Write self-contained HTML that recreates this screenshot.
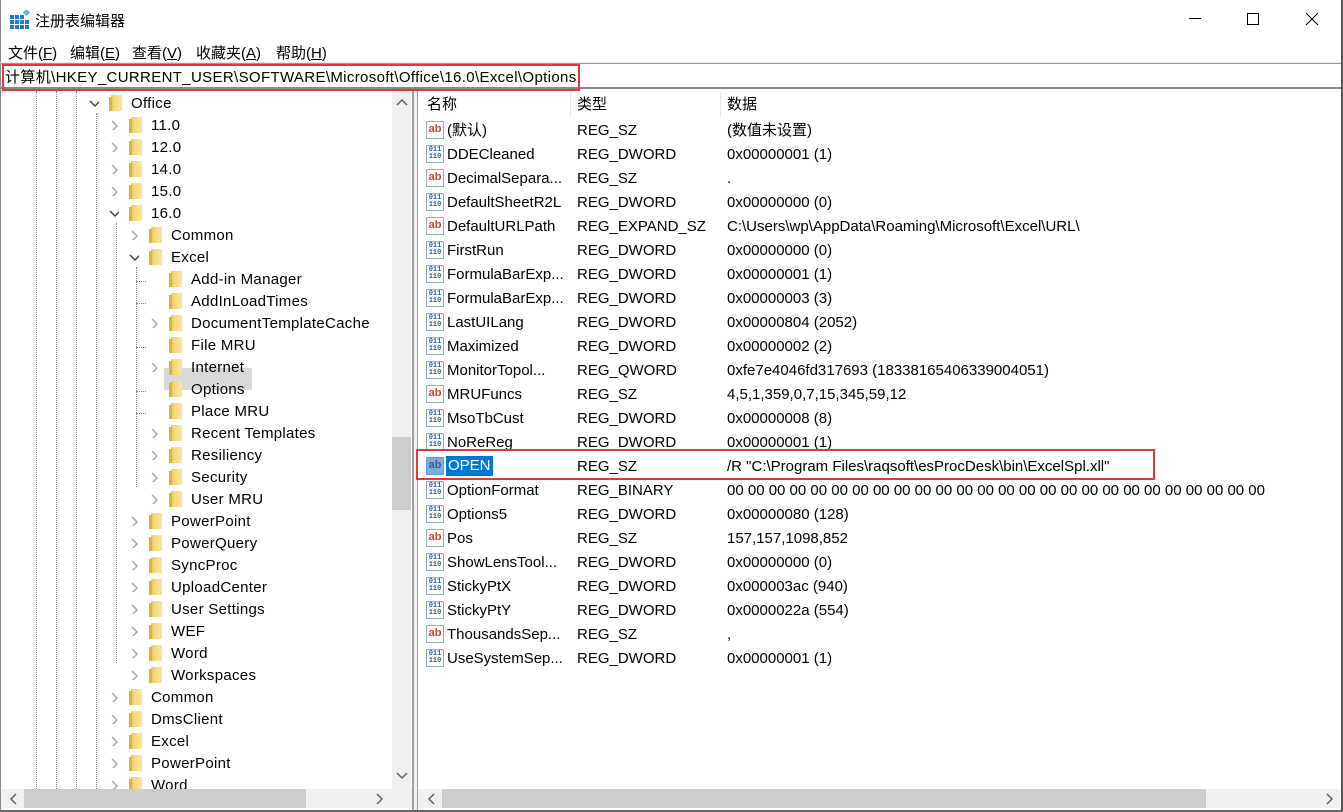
<!DOCTYPE html>
<html><head><meta charset="utf-8"><style>
*{margin:0;padding:0;box-sizing:border-box}
body{width:1343px;height:812px;overflow:hidden;background:#fff;font-family:"Liberation Sans","Noto Sans CJK SC",sans-serif;font-size:15px;color:#000;position:relative}
.a{position:absolute}
.win{position:absolute;left:0;top:0;width:1343px;height:812px;border-left:1px solid #888;border-right:2px solid #555;border-bottom:2px solid #666}
.r{position:absolute;height:22px;line-height:22px;white-space:nowrap}
.r span{top:2px;letter-spacing:0.3px}
.f{position:absolute;top:4px;width:11px;height:16px;background:linear-gradient(90deg,#e8c45a 0,#f5d97a 30%,#fbe5a0 100%);border-radius:1px}
.f:before{content:"";position:absolute;left:-2px;top:2px;width:3px;height:14px;background:#dcb244}
.cv{position:absolute;top:7px;width:10px;height:10px}
.row{position:absolute;left:419px;height:24px;line-height:24px;white-space:nowrap;width:900px}
.row span{position:absolute;top:2px}
.ic{position:absolute;left:7px;top:4px;width:18px;height:18px;border:1px solid #9aa;border-radius:1px;background:#fff;font:bold 11px/14px "Liberation Sans",sans-serif;text-align:center}
.ab{color:#c8402a}
.bn{color:#2a5aa8;font:bold 7px/7px "Liberation Mono",monospace;padding-top:1px;letter-spacing:0}
</style></head><body>
<div class="win"></div>
<svg class="a" style="left:10px;top:10px" width="20" height="20" viewBox="0 0 20 20"><g fill="#1e7bd0"><rect x="0" y="5" width="4" height="4"/><rect x="5" y="5" width="4" height="4"/><rect x="10" y="5" width="4" height="4"/><rect x="0" y="10" width="4" height="4"/><rect x="5" y="10" width="4" height="4"/><rect x="10" y="10" width="4" height="4"/><rect x="0" y="15" width="4" height="4"/><rect x="5" y="15" width="4" height="4"/><rect x="10" y="15" width="4" height="4"/><rect x="15" y="10" width="4" height="4"/><rect x="15" y="15" width="4" height="4"/></g><rect x="14" y="0" width="5" height="5" fill="#6ab0ee" transform="rotate(45 16.5 2.5)"/></svg>
<div class="a" style="left:35px;top:10px;font-size:15px">注册表编辑器</div>
<div class="a" style="left:1189px;top:18px;width:12px;height:1px;background:#000"></div>
<div class="a" style="left:1247px;top:13px;width:12px;height:12px;border:1px solid #000"></div>
<svg class="a" style="left:1305px;top:12px" width="14" height="14"><path d="M1 1L13 13M13 1L1 13" stroke="#000" stroke-width="1"/></svg>
<div class="a" style="left:8px;top:42px">文件(<u>F</u>)</div>
<div class="a" style="left:70px;top:42px">编辑(<u>E</u>)</div>
<div class="a" style="left:132px;top:42px">查看(<u>V</u>)</div>
<div class="a" style="left:196px;top:42px">收藏夹(<u>A</u>)</div>
<div class="a" style="left:276px;top:42px">帮助(<u>H</u>)</div>
<div class="a" style="left:0;top:62px;width:1341px;height:1px;background:#e8e8e8"></div>
<div class="a" style="left:0;top:63px;width:1341px;height:26px;border-top:1px solid #999;border-bottom:2px solid #888"></div>
<div class="a" style="left:2px;top:64px;width:578px;height:27px;border:2px solid #e8343a"></div>
<div class="a" style="left:5px;top:67px;line-height:22px;letter-spacing:0.35px">计算机\HKEY_CURRENT_USER\SOFTWARE\Microsoft\Office\16.0\Excel\Options</div>
<div class="a" style="left:1px;top:91px;width:412px;height:719px;overflow:hidden;background:#fff">
<div class="a" style="left:35px;top:0;height:700px;border-left:1px dotted #888"></div>
<div class="a" style="left:55px;top:0;height:700px;border-left:1px dotted #888"></div>
<div class="a" style="left:75px;top:0;height:700px;border-left:1px dotted #888"></div>
<div class="a" style="left:95px;top:22px;height:680px;border-left:1px dotted #888"></div>
<div class="a" style="left:115px;top:132px;height:440px;border-left:1px dotted #888"></div>
<div class="a" style="left:135px;top:176px;height:220px;border-left:1px dotted #888"></div>
<div class="a" style="left:163px;top:277px;width:88px;height:22px;background:#d9d9d9"></div>
<div class="a" style="left:135px;top:190px;width:10px;border-top:1px dotted #888"></div>
<div class="a" style="left:135px;top:212px;width:10px;border-top:1px dotted #888"></div>
<div class="a" style="left:135px;top:256px;width:10px;border-top:1px dotted #888"></div>
<div class="a" style="left:135px;top:300px;width:10px;border-top:1px dotted #888"></div>
<div class="a" style="left:135px;top:322px;width:10px;border-top:1px dotted #888"></div>
</div>
<div class="a" style="left:1px;top:91px;width:391px;height:698px;overflow:hidden">
<div class="r" style="top:0;left:88px"><svg class="cv" width="12" height="10" style="left:0;top:8px"><path d="M1 2L6 7L11 2" stroke="#444" stroke-width="1.5" fill="none"/></svg><b class="f" style="left:22px"></b><span style="position:absolute;left:42px">Office</span></div>
<div class="r" style="top:22px;left:108px"><svg class="cv" width="10" height="12"><path d="M3 1L8 6L3 11" stroke="#aaa" stroke-width="1.5" fill="none"/></svg><b class="f" style="left:22px"></b><span style="position:absolute;left:42px">11.0</span></div>
<div class="r" style="top:44px;left:108px"><svg class="cv" width="10" height="12"><path d="M3 1L8 6L3 11" stroke="#aaa" stroke-width="1.5" fill="none"/></svg><b class="f" style="left:22px"></b><span style="position:absolute;left:42px">12.0</span></div>
<div class="r" style="top:66px;left:108px"><svg class="cv" width="10" height="12"><path d="M3 1L8 6L3 11" stroke="#aaa" stroke-width="1.5" fill="none"/></svg><b class="f" style="left:22px"></b><span style="position:absolute;left:42px">14.0</span></div>
<div class="r" style="top:88px;left:108px"><svg class="cv" width="10" height="12"><path d="M3 1L8 6L3 11" stroke="#aaa" stroke-width="1.5" fill="none"/></svg><b class="f" style="left:22px"></b><span style="position:absolute;left:42px">15.0</span></div>
<div class="r" style="top:110px;left:108px"><svg class="cv" width="12" height="10" style="left:0;top:8px"><path d="M1 2L6 7L11 2" stroke="#444" stroke-width="1.5" fill="none"/></svg><b class="f" style="left:22px"></b><span style="position:absolute;left:42px">16.0</span></div>
<div class="r" style="top:132px;left:128px"><svg class="cv" width="10" height="12"><path d="M3 1L8 6L3 11" stroke="#aaa" stroke-width="1.5" fill="none"/></svg><b class="f" style="left:22px"></b><span style="position:absolute;left:42px">Common</span></div>
<div class="r" style="top:154px;left:128px"><svg class="cv" width="12" height="10" style="left:0;top:8px"><path d="M1 2L6 7L11 2" stroke="#444" stroke-width="1.5" fill="none"/></svg><b class="f" style="left:22px"></b><span style="position:absolute;left:42px">Excel</span></div>
<div class="r" style="top:176px;left:148px"><b class="f" style="left:22px"></b><span style="position:absolute;left:42px">Add-in Manager</span></div>
<div class="r" style="top:198px;left:148px"><b class="f" style="left:22px"></b><span style="position:absolute;left:42px">AddInLoadTimes</span></div>
<div class="r" style="top:220px;left:148px"><svg class="cv" width="10" height="12"><path d="M3 1L8 6L3 11" stroke="#aaa" stroke-width="1.5" fill="none"/></svg><b class="f" style="left:22px"></b><span style="position:absolute;left:42px">DocumentTemplateCache</span></div>
<div class="r" style="top:242px;left:148px"><b class="f" style="left:22px"></b><span style="position:absolute;left:42px">File MRU</span></div>
<div class="r" style="top:264px;left:148px"><svg class="cv" width="10" height="12"><path d="M3 1L8 6L3 11" stroke="#aaa" stroke-width="1.5" fill="none"/></svg><b class="f" style="left:22px"></b><span style="position:absolute;left:42px">Internet</span></div>
<div class="r" style="top:286px;left:148px"><b class="f" style="left:22px"></b><span style="position:absolute;left:42px">Options</span></div>
<div class="r" style="top:308px;left:148px"><b class="f" style="left:22px"></b><span style="position:absolute;left:42px">Place MRU</span></div>
<div class="r" style="top:330px;left:148px"><svg class="cv" width="10" height="12"><path d="M3 1L8 6L3 11" stroke="#aaa" stroke-width="1.5" fill="none"/></svg><b class="f" style="left:22px"></b><span style="position:absolute;left:42px">Recent Templates</span></div>
<div class="r" style="top:352px;left:148px"><svg class="cv" width="10" height="12"><path d="M3 1L8 6L3 11" stroke="#aaa" stroke-width="1.5" fill="none"/></svg><b class="f" style="left:22px"></b><span style="position:absolute;left:42px">Resiliency</span></div>
<div class="r" style="top:374px;left:148px"><svg class="cv" width="10" height="12"><path d="M3 1L8 6L3 11" stroke="#aaa" stroke-width="1.5" fill="none"/></svg><b class="f" style="left:22px"></b><span style="position:absolute;left:42px">Security</span></div>
<div class="r" style="top:396px;left:148px"><svg class="cv" width="10" height="12"><path d="M3 1L8 6L3 11" stroke="#aaa" stroke-width="1.5" fill="none"/></svg><b class="f" style="left:22px"></b><span style="position:absolute;left:42px">User MRU</span></div>
<div class="r" style="top:418px;left:128px"><svg class="cv" width="10" height="12"><path d="M3 1L8 6L3 11" stroke="#aaa" stroke-width="1.5" fill="none"/></svg><b class="f" style="left:22px"></b><span style="position:absolute;left:42px">PowerPoint</span></div>
<div class="r" style="top:440px;left:128px"><svg class="cv" width="10" height="12"><path d="M3 1L8 6L3 11" stroke="#aaa" stroke-width="1.5" fill="none"/></svg><b class="f" style="left:22px"></b><span style="position:absolute;left:42px">PowerQuery</span></div>
<div class="r" style="top:462px;left:128px"><svg class="cv" width="10" height="12"><path d="M3 1L8 6L3 11" stroke="#aaa" stroke-width="1.5" fill="none"/></svg><b class="f" style="left:22px"></b><span style="position:absolute;left:42px">SyncProc</span></div>
<div class="r" style="top:484px;left:128px"><svg class="cv" width="10" height="12"><path d="M3 1L8 6L3 11" stroke="#aaa" stroke-width="1.5" fill="none"/></svg><b class="f" style="left:22px"></b><span style="position:absolute;left:42px">UploadCenter</span></div>
<div class="r" style="top:506px;left:128px"><svg class="cv" width="10" height="12"><path d="M3 1L8 6L3 11" stroke="#aaa" stroke-width="1.5" fill="none"/></svg><b class="f" style="left:22px"></b><span style="position:absolute;left:42px">User Settings</span></div>
<div class="r" style="top:528px;left:128px"><svg class="cv" width="10" height="12"><path d="M3 1L8 6L3 11" stroke="#aaa" stroke-width="1.5" fill="none"/></svg><b class="f" style="left:22px"></b><span style="position:absolute;left:42px">WEF</span></div>
<div class="r" style="top:550px;left:128px"><svg class="cv" width="10" height="12"><path d="M3 1L8 6L3 11" stroke="#aaa" stroke-width="1.5" fill="none"/></svg><b class="f" style="left:22px"></b><span style="position:absolute;left:42px">Word</span></div>
<div class="r" style="top:572px;left:128px"><svg class="cv" width="10" height="12"><path d="M3 1L8 6L3 11" stroke="#aaa" stroke-width="1.5" fill="none"/></svg><b class="f" style="left:22px"></b><span style="position:absolute;left:42px">Workspaces</span></div>
<div class="r" style="top:594px;left:108px"><svg class="cv" width="10" height="12"><path d="M3 1L8 6L3 11" stroke="#aaa" stroke-width="1.5" fill="none"/></svg><b class="f" style="left:22px"></b><span style="position:absolute;left:42px">Common</span></div>
<div class="r" style="top:616px;left:108px"><svg class="cv" width="10" height="12"><path d="M3 1L8 6L3 11" stroke="#aaa" stroke-width="1.5" fill="none"/></svg><b class="f" style="left:22px"></b><span style="position:absolute;left:42px">DmsClient</span></div>
<div class="r" style="top:638px;left:108px"><svg class="cv" width="10" height="12"><path d="M3 1L8 6L3 11" stroke="#aaa" stroke-width="1.5" fill="none"/></svg><b class="f" style="left:22px"></b><span style="position:absolute;left:42px">Excel</span></div>
<div class="r" style="top:660px;left:108px"><svg class="cv" width="10" height="12"><path d="M3 1L8 6L3 11" stroke="#aaa" stroke-width="1.5" fill="none"/></svg><b class="f" style="left:22px"></b><span style="position:absolute;left:42px">PowerPoint</span></div>
<div class="r" style="top:682px;left:108px"><svg class="cv" width="10" height="12"><path d="M3 1L8 6L3 11" stroke="#aaa" stroke-width="1.5" fill="none"/></svg><b class="f" style="left:22px"></b><span style="position:absolute;left:42px">Word</span></div>
</div>
<div class="a" style="left:392px;top:91px;width:19px;height:698px;background:#f0f0f0"></div>
<div class="a" style="left:392px;top:437px;width:19px;height:73px;background:#cdcdcd"></div>
<svg class="a" style="left:396px;top:98px" width="12" height="8"><path d="M1 7L6 2L11 7" stroke="#606060" stroke-width="1.5" fill="none"/></svg>
<svg class="a" style="left:396px;top:772px" width="12" height="8"><path d="M1 1L6 6L11 1" stroke="#606060" stroke-width="1.5" fill="none"/></svg>
<div class="a" style="left:1px;top:789px;width:411px;height:19px;background:#f0f0f0"></div>
<div class="a" style="left:24px;top:789px;width:282px;height:19px;background:#cdcdcd"></div>
<svg class="a" style="left:9px;top:793px" width="8" height="12"><path d="M7 1L2 6L7 11" stroke="#606060" stroke-width="1.5" fill="none"/></svg>
<svg class="a" style="left:376px;top:793px" width="8" height="12"><path d="M1 1L6 6L1 11" stroke="#606060" stroke-width="1.5" fill="none"/></svg>
<div class="a" style="left:412px;top:91px;width:2px;height:719px;background:#a0a0a0"></div>
<div class="a" style="left:414px;top:91px;width:3px;height:719px;background:#f0f0f0"></div>
<div class="a" style="left:417px;top:91px;width:1px;height:719px;background:#a0a0a0"></div>
<div class="a" style="left:427px;top:94px;line-height:22px">名称</div>
<div class="a" style="left:570px;top:93px;width:1px;height:24px;background:#e5e5e5"></div>
<div class="a" style="left:577px;top:94px;line-height:22px">类型</div>
<div class="a" style="left:720px;top:93px;width:1px;height:24px;background:#e5e5e5"></div>
<div class="a" style="left:727px;top:94px;line-height:22px">数据</div>
<div class="row" style="top:117px"><b class="ic ab">ab</b><span style="left:28px">(默认)</span><span style="left:158px">REG_SZ</span><span style="left:308px">(数值未设置)</span></div>
<div class="row" style="top:141px"><b class="ic bn">011<br>110</b><span style="left:28px">DDECleaned</span><span style="left:158px">REG_DWORD</span><span style="left:308px">0x00000001 (1)</span></div>
<div class="row" style="top:165px"><b class="ic ab">ab</b><span style="left:28px">DecimalSepara...</span><span style="left:158px">REG_SZ</span><span style="left:308px">.</span></div>
<div class="row" style="top:189px"><b class="ic bn">011<br>110</b><span style="left:28px">DefaultSheetR2L</span><span style="left:158px">REG_DWORD</span><span style="left:308px">0x00000000 (0)</span></div>
<div class="row" style="top:213px"><b class="ic ab">ab</b><span style="left:28px">DefaultURLPath</span><span style="left:158px">REG_EXPAND_SZ</span><span style="left:308px">C:\Users\wp\AppData\Roaming\Microsoft\Excel\URL\</span></div>
<div class="row" style="top:237px"><b class="ic bn">011<br>110</b><span style="left:28px">FirstRun</span><span style="left:158px">REG_DWORD</span><span style="left:308px">0x00000000 (0)</span></div>
<div class="row" style="top:261px"><b class="ic bn">011<br>110</b><span style="left:28px">FormulaBarExp...</span><span style="left:158px">REG_DWORD</span><span style="left:308px">0x00000001 (1)</span></div>
<div class="row" style="top:285px"><b class="ic bn">011<br>110</b><span style="left:28px">FormulaBarExp...</span><span style="left:158px">REG_DWORD</span><span style="left:308px">0x00000003 (3)</span></div>
<div class="row" style="top:309px"><b class="ic bn">011<br>110</b><span style="left:28px">LastUILang</span><span style="left:158px">REG_DWORD</span><span style="left:308px">0x00000804 (2052)</span></div>
<div class="row" style="top:333px"><b class="ic bn">011<br>110</b><span style="left:28px">Maximized</span><span style="left:158px">REG_DWORD</span><span style="left:308px">0x00000002 (2)</span></div>
<div class="row" style="top:357px"><b class="ic bn">011<br>110</b><span style="left:28px">MonitorTopol...</span><span style="left:158px">REG_QWORD</span><span style="left:308px">0xfe7e4046fd317693 (18338165406339004051)</span></div>
<div class="row" style="top:381px"><b class="ic ab">ab</b><span style="left:28px">MRUFuncs</span><span style="left:158px">REG_SZ</span><span style="left:308px">4,5,1,359,0,7,15,345,59,12</span></div>
<div class="row" style="top:405px"><b class="ic bn">011<br>110</b><span style="left:28px">MsoTbCust</span><span style="left:158px">REG_DWORD</span><span style="left:308px">0x00000008 (8)</span></div>
<div class="row" style="top:429px"><b class="ic bn">011<br>110</b><span style="left:28px">NoReReg</span><span style="left:158px">REG_DWORD</span><span style="left:308px">0x00000001 (1)</span></div>
<div class="row" style="top:453px"><b class="ic" style="background:#7aaee0;color:#4a5a8a;border-color:#6a9ad0">ab</b><span style="left:27px;top:3px;height:20px;line-height:20px;background:#0078d7;color:#fff;padding:0 2px;outline:1px dotted #ffd">OPEN</span><span style="left:158px">REG_SZ</span><span style="left:308px">/R "C:\Program Files\raqsoft\esProcDesk\bin\ExcelSpl.xll"</span></div>
<div class="row" style="top:477px"><b class="ic bn">011<br>110</b><span style="left:28px">OptionFormat</span><span style="left:158px">REG_BINARY</span><span style="left:308px">00 00 00 00 00 00 00 00 00 00 00 00 00 00 00 00 00 00 00 00 00 00 00 00 00 00</span></div>
<div class="row" style="top:501px"><b class="ic bn">011<br>110</b><span style="left:28px">Options5</span><span style="left:158px">REG_DWORD</span><span style="left:308px">0x00000080 (128)</span></div>
<div class="row" style="top:525px"><b class="ic ab">ab</b><span style="left:28px">Pos</span><span style="left:158px">REG_SZ</span><span style="left:308px">157,157,1098,852</span></div>
<div class="row" style="top:549px"><b class="ic bn">011<br>110</b><span style="left:28px">ShowLensTool...</span><span style="left:158px">REG_DWORD</span><span style="left:308px">0x00000000 (0)</span></div>
<div class="row" style="top:573px"><b class="ic bn">011<br>110</b><span style="left:28px">StickyPtX</span><span style="left:158px">REG_DWORD</span><span style="left:308px">0x000003ac (940)</span></div>
<div class="row" style="top:597px"><b class="ic bn">011<br>110</b><span style="left:28px">StickyPtY</span><span style="left:158px">REG_DWORD</span><span style="left:308px">0x0000022a (554)</span></div>
<div class="row" style="top:621px"><b class="ic ab">ab</b><span style="left:28px">ThousandsSep...</span><span style="left:158px">REG_SZ</span><span style="left:308px">,</span></div>
<div class="row" style="top:645px"><b class="ic bn">011<br>110</b><span style="left:28px">UseSystemSep...</span><span style="left:158px">REG_DWORD</span><span style="left:308px">0x00000001 (1)</span></div>
<div class="a" style="left:416px;top:449px;width:739px;height:31px;border:2px solid #e8343a"></div>
<div class="a" style="left:418px;top:789px;width:922px;height:19px;background:#f0f0f0"></div>
<div class="a" style="left:442px;top:789px;width:764px;height:19px;background:#cdcdcd"></div>
<svg class="a" style="left:427px;top:793px" width="8" height="12"><path d="M7 1L2 6L7 11" stroke="#606060" stroke-width="1.5" fill="none"/></svg>
<svg class="a" style="left:1326px;top:793px" width="8" height="12"><path d="M1 1L6 6L1 11" stroke="#606060" stroke-width="1.5" fill="none"/></svg>
</body></html>
